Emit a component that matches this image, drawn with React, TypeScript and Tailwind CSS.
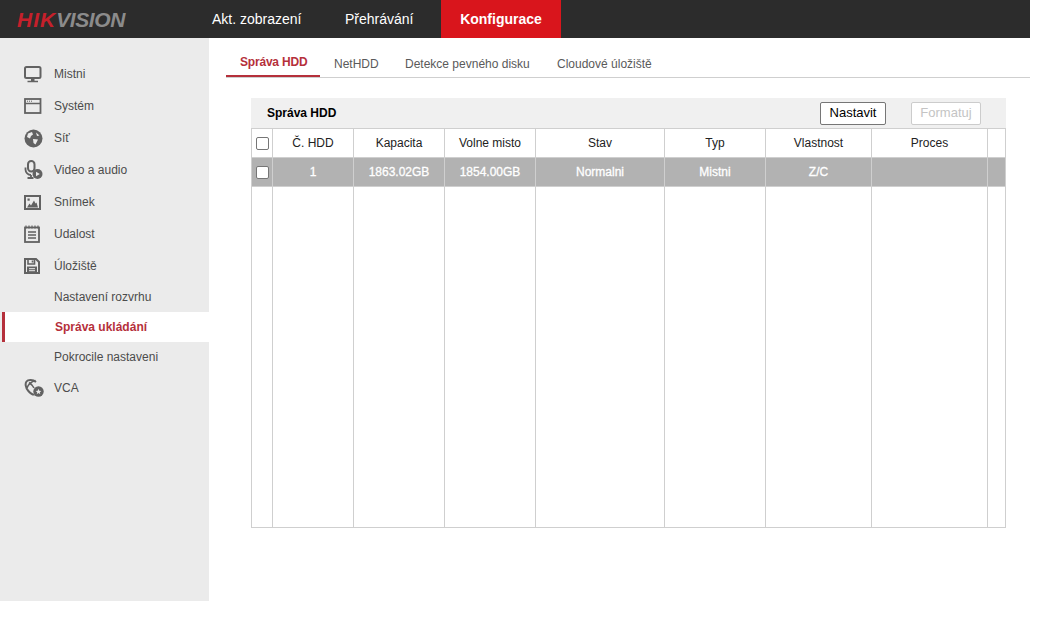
const font = "font-['Liberation_Sans',Arial,sans-serif]";

function MonitorIcon() {
  return (
    <svg width="18" height="17" viewBox="0 0 18 17" fill="none">
      <rect x="1" y="1" width="15.500" height="11" rx="1.500" stroke="#626262" strokeWidth="2" />
      <path d="M7 13h3.500v2H7z" fill="#626262" />
      <path d="M3.500 15.500h10.500" stroke="#626262" strokeWidth="1.500" />
    </svg>
  );
}

function WindowIcon() {
  return (
    <svg width="18" height="16" viewBox="0 0 18 16" fill="none">
      <rect x="1" y="1" width="15.500" height="14" stroke="#626262" strokeWidth="1.800" />
      <path d="M1 5.500h15.500" stroke="#626262" strokeWidth="1.500" />
      <path d="M3 3.200h1M5 3.200h1M7 3.200h1" stroke="#626262" strokeWidth="1" />
    </svg>
  );
}

function GlobeIcon() {
  return (
    <svg width="19" height="19" viewBox="0 0 19 19">
      <circle cx="9.500" cy="9.500" r="9" fill="#626262" />
      <path d="M4 4.500l4-1.500 1 2.500-2 1.500-1 2.500-3-1.500zM9 10l5 .5-2.500 5-2-1.500zM12 3.500l3.500 3-2.500.5z" fill="#ebebeb" />
    </svg>
  );
}

function MicPlayIcon() {
  return (
    <svg width="19" height="20" viewBox="0 0 19 20" fill="none">
      <rect x="4" y="1" width="6.500" height="10.500" rx="3.200" stroke="#626262" strokeWidth="2" />
      <path d="M1.500 7.500v2a5.500 5.500 0 0 0 5.500 5.500M3.500 18h6" stroke="#626262" strokeWidth="1.800" />
      <path d="M7 15v3" stroke="#626262" strokeWidth="1.800" />
      <circle cx="13.500" cy="14" r="5" fill="#626262" />
      <path d="M12 11.700l3.800 2.300-3.800 2.300z" fill="#ebebeb" />
    </svg>
  );
}

function ImageIcon() {
  return (
    <svg width="17" height="15" viewBox="0 0 17 15" fill="none">
      <rect x="1" y="1" width="15" height="13" stroke="#626262" strokeWidth="2" />
      <rect x="3.500" y="3.500" width="2.200" height="2.200" fill="#626262" />
      <path d="M3 12.500l2.500-4 1.500 2 3-5 1.500 3 1-1 1.500 5z" fill="#626262" />
    </svg>
  );
}

function CalendarIcon() {
  return (
    <svg width="16" height="18" viewBox="0 0 16 18" fill="none">
      <rect x="1" y="2.500" width="14" height="14.500" stroke="#626262" strokeWidth="1.800" />
      <path d="M2 .500v3M5 .500v3M8 .500v3M11 .500v3M14 .500v3" stroke="#626262" strokeWidth="1.200" />
      <path d="M4 7h8M4 10h8M4 13h8" stroke="#626262" strokeWidth="1.300" />
    </svg>
  );
}

function FloppyIcon() {
  return (
    <svg width="16" height="16" viewBox="0 0 16 16" fill="none">
      <path d="M1 1h11l3 3v11H1z" stroke="#626262" strokeWidth="2" />
      <path d="M4 1v5h6.500V1M8.500 2.500v2" stroke="#626262" strokeWidth="1.600" />
      <path d="M3 8.500h10v6H3z" fill="#626262" />
      <path d="M5 10.700h6M5 12.700h6" stroke="#ebebeb" strokeWidth="1" />
    </svg>
  );
}

function VcaIcon() {
  return (
    <svg width="20" height="18" viewBox="0 0 20 18" fill="none">
      <path d="M12 3C9 .5 4 .5 2.500 2.500S1.500 8.500 4 11.500s5 4.500 6.500 4" stroke="#626262" strokeWidth="2" />
      <path d="M3 9c1.500-4 4.500-6.500 8.500-7.500M5 3.500c1.500 1 4 3.500 5 5.500" stroke="#626262" strokeWidth="1.600" />
      <circle cx="14.500" cy="12.500" r="5.200" fill="#626262" />
      <path d="M14.500 9.800l.8 1.900 2 .2-1.500 1.300.5 2-1.800-1.100-1.800 1.100.5-2-1.500-1.300 2-.2z" fill="#ebebeb" />
    </svg>
  );
}

const menu = [
  { label: "Mistni", icon: <MonitorIcon /> },
  { label: "Systém", icon: <WindowIcon /> },
  { label: "Síť", icon: <GlobeIcon /> },
  { label: "Video a audio", icon: <MicPlayIcon /> },
  { label: "Snímek", icon: <ImageIcon /> },
  { label: "Udalost", icon: <CalendarIcon /> },
  { label: "Úložiště", icon: <FloppyIcon /> },
];

const columns = [
  { name: "Č. HDD", value: "1", width: "w-[81px]" },
  { name: "Kapacita", value: "1863.02GB", width: "w-[91px]" },
  { name: "Volne misto", value: "1854.00GB", width: "w-[91px]" },
  { name: "Stav", value: "Normalni", width: "w-[129px]" },
  { name: "Typ", value: "Mistni", width: "w-[101px]" },
  { name: "Vlastnost", value: "Z/C", width: "w-[106px]" },
  { name: "Proces", value: "", width: "w-[116px]" },
];

function MenuItem({ label, icon }: { label: string; icon: React.ReactNode }) {
  return (
    <div className="h-8 flex items-center">
      <div className="w-[54px] pl-[24px] flex items-center shrink-0">{icon}</div>
      <span className="text-xs text-[#4c4c4c]">{label}</span>
    </div>
  );
}

function Checkbox() {
  return <div className="w-[13px] h-[13px] bg-white border border-[#767676] rounded-[2px]" />;
}

export default function App() {
  return (
    <div className={`${font} w-[1060px] h-[628px] bg-white overflow-hidden`}>
      <header className="w-[1030px] h-[38px] bg-[#2c2c2c] flex items-stretch">
        <div className="w-[212px] pl-[17px] flex items-center shrink-0 text-[21px] leading-none italic font-bold">
          <span className="text-[#c5202b] tracking-[1px]">HIK</span>
          <span className="text-[#8b8b8b] tracking-[-0.4px]">VISION</span>
        </div>
        <div className="w-[133px] flex items-center text-sm text-white">Akt. zobrazení</div>
        <div className="w-[96px] flex items-center text-sm text-white">Přehrávání</div>
        <div className="w-[120px] flex items-center justify-center bg-[#d9151c] text-sm font-bold text-white">
          Konfigurace
        </div>
      </header>

      <div className="flex">
        <aside className="w-[209px] h-[563px] bg-[#ebebeb] pt-5 shrink-0">
          {menu.map((m) => (
            <MenuItem key={m.label} label={m.label} icon={m.icon} />
          ))}
          <div className="h-[30px] pl-[54px] flex items-center text-xs text-[#4c4c4c]">Nastavení rozvrhu</div>
          <div className="h-[30px] ml-[2px] pl-[53px] flex items-center text-xs font-bold text-[#b5303b] bg-white relative">
            <span className="absolute left-0 top-0 bottom-0 w-[3px] bg-[#b5303b]" />
            Správa ukládání
          </div>
          <div className="h-[30px] pl-[54px] flex items-center text-xs text-[#4c4c4c]">Pokrocile nastaveni</div>
          <MenuItem label="VCA" icon={<VcaIcon />} />
        </aside>

        <main className="w-[821px] pl-[17px] pt-[14px]">
          <nav className="h-[25px] flex border-b border-[#cfcfcf] text-xs text-[#5a5a5a] box-content">
            <div className="w-[94px] h-[25px] pl-[14px] pt-[2px] font-bold tracking-[-0.2px] text-[#b5303b] border-b-2 border-[#b5303b]">
              Správa HDD
            </div>
            <div className="w-[85px] pl-[14px] pt-[4px]">NetHDD</div>
            <div className="w-[152px] pt-[4px]">Detekce pevného disku</div>
            <div className="pt-[4px]">Cloudové úložiště</div>
          </nav>

          <section className="ml-[25px] mt-[20px] w-[755px]">
            <div className="h-[30px] bg-[#f0f0f0] flex items-center pl-4 pr-[25px]">
              <span className="text-xs font-bold text-black">Správa HDD</span>
              <button className="ml-auto w-[66px] h-[23px] bg-white border border-[#767676] rounded-[2px] text-[13px] text-black">
                Nastavit
              </button>
              <button className="ml-[25px] w-[70px] h-[23px] bg-white border border-[#cccccc] rounded-[2px] text-[13px] text-[#c4c4c4]">
                Formatuj
              </button>
            </div>
            <table className="w-[755px] h-[400px] table-fixed border-collapse border border-[#cfcfcf] text-xs">
              <thead>
                <tr className="h-[29px] text-[#222222]">
                  <th className="w-[21px] border border-[#cfcfcf] font-normal">
                    <div className="pl-[4px]"><Checkbox /></div>
                  </th>
                  {columns.map((c) => (
                    <th key={c.name} className={`${c.width} border border-[#cfcfcf] font-normal`}>
                      {c.name}
                    </th>
                  ))}
                  <th className="border border-[#cfcfcf]" />
                </tr>
              </thead>
              <tbody>
                <tr className="h-[29px] bg-[#b2b2b2] text-white">
                  <td className="border border-[#cfcfcf]">
                    <div className="pl-[4px]"><Checkbox /></div>
                  </td>
                  {columns.map((c) => (
                    <td key={c.name} className="border border-[#cfcfcf] text-center [-webkit-text-stroke:0.3px_white]">
                      {c.value}
                    </td>
                  ))}
                  <td className="border border-[#cfcfcf]" />
                </tr>
                <tr>
                  <td className="border border-[#cfcfcf]" />
                  {columns.map((c) => (
                    <td key={c.name} className="border border-[#cfcfcf]" />
                  ))}
                  <td className="border border-[#cfcfcf]" />
                </tr>
              </tbody>
            </table>
          </section>
        </main>
      </div>
    </div>
  );
}
